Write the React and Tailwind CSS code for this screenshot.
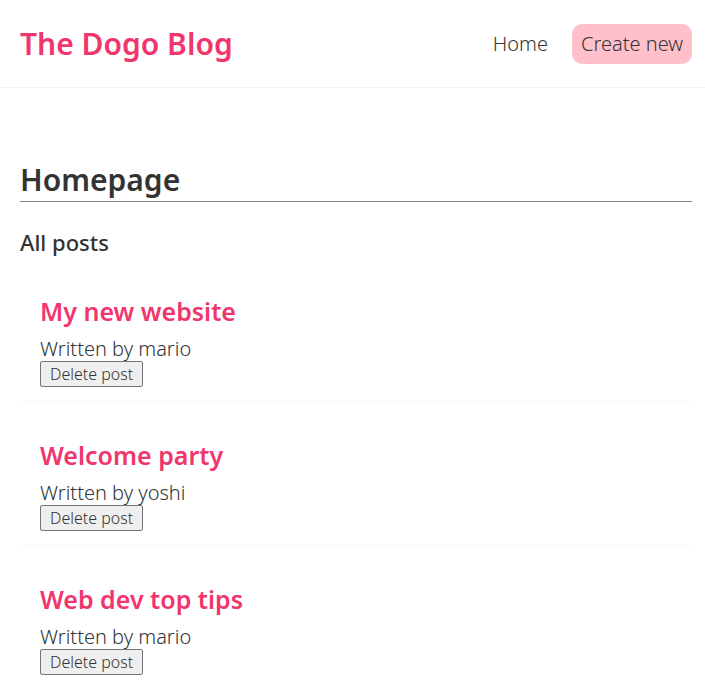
export default function App() {
  const posts = [
    { title: "My new website", author: "mario" },
    { title: "Welcome party", author: "yoshi" },
    { title: "Web dev top tips", author: "mario" },
  ];
  return (
    <div className="bg-white text-[#333] min-h-[688px]" style={{ fontFamily: "'Noto Sans', Lato, sans-serif" }}>
      <nav className="flex items-center h-[88px] pl-[20px] pr-[13px] border-b border-[#f2f2f2]">
        <h1 className="text-[30px] font-semibold text-[#f1356d] leading-none">The Dogo Blog</h1>
        <div className="ml-auto flex items-center">
          <a className="text-[20px] font-light px-[6px] py-[6px] text-[#333]">Home</a>
          <a className="ml-[18px] text-[20px] font-light px-[9px] h-[40px] flex items-center rounded-[10px] bg-[#ffc0cb] text-[#333]">Create new</a>
        </div>
      </nav>
      <main className="pl-[20px] pr-[13px] pt-[75px]">
        <h2 className="text-[30px] font-semibold leading-[34px] pb-[4px] border-b border-[#888]">Homepage</h2>
        <h3 className="text-[22px] font-medium mt-[27px] leading-[26px]">All posts</h3>
        <div className="mt-[24px]">
          {posts.map((p, i) => (
            <div key={i} className="px-[20px] pt-[17px] pb-[14px] border-b border-[#f5f5f5] mb-[21px]">
              <h2 className="text-[25px] font-semibold text-[#f1356d] leading-[30px] mb-[12px]">{p.title}</h2>
              <p className="text-[20px] font-light leading-[22px]">Written by {p.author}</p>
              <button className="mt-[1px] text-[16px] font-light leading-[18px] px-[9px] py-[3px] bg-[#efefef] border border-[#767676] rounded-[2px] text-[#333]">Delete post</button>
            </div>
          ))}
        </div>
      </main>
    </div>
  );
}
